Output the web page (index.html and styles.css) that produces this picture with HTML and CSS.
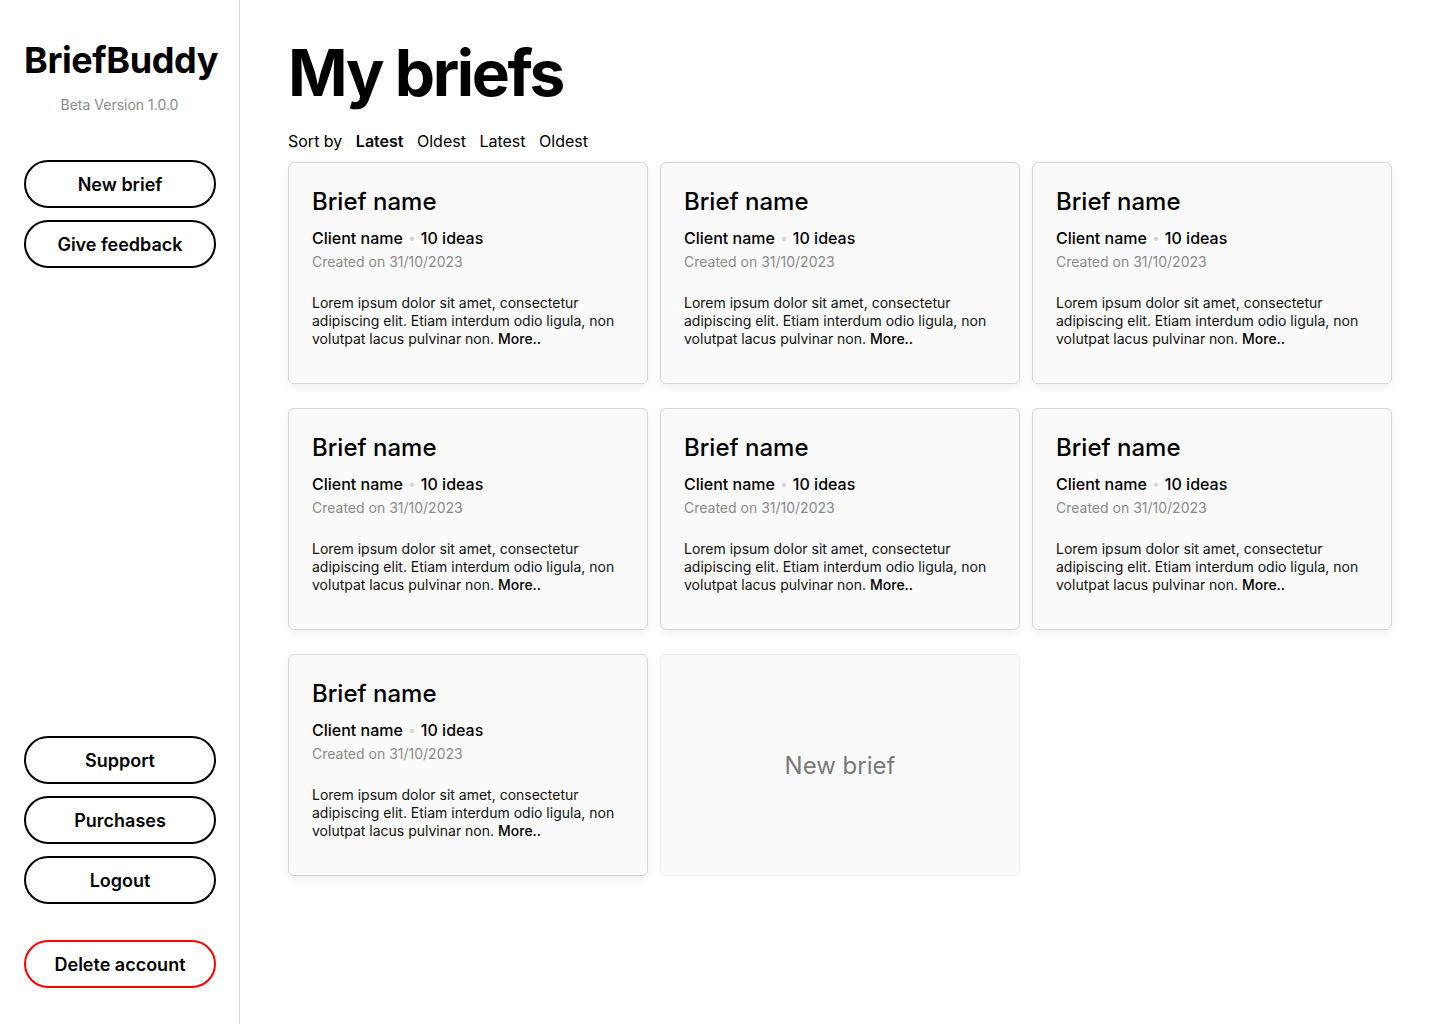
FILE: index.html
```html
<!DOCTYPE html>
<html lang="en">
<head>
<meta charset="utf-8">
<title>BriefBuddy - My briefs</title>
<link rel="stylesheet" href="styles.css">
</head>
<body>
<div class="app">
  <aside class="sidebar">
    <div class="brand">
      <div class="logo">BriefBuddy</div>
      <div class="version">Beta Version 1.0.0</div>
    </div>
    <div class="nav-top">
      <button class="pill">New brief</button>
      <button class="pill">Give feedback</button>
    </div>
    <div class="nav-bottom">
      <button class="pill">Support</button>
      <button class="pill">Purchases</button>
      <button class="pill">Logout</button>
      <button class="pill danger">Delete account</button>
    </div>
  </aside>
  <main class="main">
    <h1 class="page-title">My briefs</h1>
    <div class="sort">
      <span class="sort-label">Sort by</span>
      <span class="sort-opt active">Latest</span>
      <span class="sort-opt">Oldest</span>
      <span class="sort-opt">Latest</span>
      <span class="sort-opt">Oldest</span>
    </div>
    <div class="grid">
      <div class="card">
        <div class="card-title">Brief name</div>
        <div class="card-meta">Client name <span class="dot">•</span> 10 ideas</div>
        <div class="card-date">Created on 31/10/2023</div>
        <p class="card-desc">Lorem ipsum dolor sit amet, consectetur adipiscing elit. Etiam interdum odio ligula, non volutpat lacus pulvinar non. <b class="more">More..</b></p>
      </div>
      <div class="card">
        <div class="card-title">Brief name</div>
        <div class="card-meta">Client name <span class="dot">•</span> 10 ideas</div>
        <div class="card-date">Created on 31/10/2023</div>
        <p class="card-desc">Lorem ipsum dolor sit amet, consectetur adipiscing elit. Etiam interdum odio ligula, non volutpat lacus pulvinar non. <b class="more">More..</b></p>
      </div>
      <div class="card">
        <div class="card-title">Brief name</div>
        <div class="card-meta">Client name <span class="dot">•</span> 10 ideas</div>
        <div class="card-date">Created on 31/10/2023</div>
        <p class="card-desc">Lorem ipsum dolor sit amet, consectetur adipiscing elit. Etiam interdum odio ligula, non volutpat lacus pulvinar non. <b class="more">More..</b></p>
      </div>
      <div class="card">
        <div class="card-title">Brief name</div>
        <div class="card-meta">Client name <span class="dot">•</span> 10 ideas</div>
        <div class="card-date">Created on 31/10/2023</div>
        <p class="card-desc">Lorem ipsum dolor sit amet, consectetur adipiscing elit. Etiam interdum odio ligula, non volutpat lacus pulvinar non. <b class="more">More..</b></p>
      </div>
      <div class="card">
        <div class="card-title">Brief name</div>
        <div class="card-meta">Client name <span class="dot">•</span> 10 ideas</div>
        <div class="card-date">Created on 31/10/2023</div>
        <p class="card-desc">Lorem ipsum dolor sit amet, consectetur adipiscing elit. Etiam interdum odio ligula, non volutpat lacus pulvinar non. <b class="more">More..</b></p>
      </div>
      <div class="card">
        <div class="card-title">Brief name</div>
        <div class="card-meta">Client name <span class="dot">•</span> 10 ideas</div>
        <div class="card-date">Created on 31/10/2023</div>
        <p class="card-desc">Lorem ipsum dolor sit amet, consectetur adipiscing elit. Etiam interdum odio ligula, non volutpat lacus pulvinar non. <b class="more">More..</b></p>
      </div>
      <div class="card">
        <div class="card-title">Brief name</div>
        <div class="card-meta">Client name <span class="dot">•</span> 10 ideas</div>
        <div class="card-date">Created on 31/10/2023</div>
        <p class="card-desc">Lorem ipsum dolor sit amet, consectetur adipiscing elit. Etiam interdum odio ligula, non volutpat lacus pulvinar non. <b class="more">More..</b></p>
      </div>
      <div class="card card-new">New brief</div>
    </div>
  </main>
</div>
</body>
</html>
```

FILE: styles.css
```css
* { box-sizing: border-box; }
html, body {
  margin: 0;
  padding: 0;
  background: #fff;
  color: #000;
  font-family: Inter, "Noto Sans", "Liberation Sans", sans-serif;
}
.app {
  display: flex;
  min-height: 1024px;
}
.sidebar {
  width: 240px;
  flex: 0 0 240px;
  border-right: 1px solid #d9d9d9;
  display: flex;
  flex-direction: column;
  padding: 38px 24px 36px 24px;
}
.brand {
  text-align: center;
}
.logo {
  font-size: 36px;
  font-weight: 700;
  line-height: 44px;
  letter-spacing: -0.4px;
}
.version {
  margin-top: 14px;
  font-size: 14px;
  line-height: 17px;
  color: #8a8a8a;
}
.nav-top {
  margin-top: 47px;
  display: flex;
  flex-direction: column;
  gap: 12px;
}
.nav-bottom {
  margin-top: auto;
  display: flex;
  flex-direction: column;
  gap: 12px;
}
.pill {
  width: 192px;
  height: 48px;
  border: 2px solid #000;
  border-radius: 24px;
  background: #fff;
  font-family: inherit;
  font-size: 18px;
  font-weight: 600;
  color: #000;
  padding: 0;
  cursor: pointer;
}
.pill.danger {
  border-color: #ff0000;
  margin-top: 24px;
}
.main {
  flex: 1;
  padding: 34px 48px 48px 48px;
}
.page-title {
  margin: 0;
  font-size: 64px;
  font-weight: 700;
  line-height: 78px;
  letter-spacing: -2.4px;
}
.sort {
  margin-top: 19px;
  display: flex;
  gap: 13.5px;
  font-size: 16px;
  line-height: 20px;
}
.sort-opt.active { font-weight: 600; }
.grid {
  margin-top: 11px;
  display: grid;
  grid-template-columns: repeat(3, 1fr);
  column-gap: 12px;
  row-gap: 24px;
}
.card {
  height: 222px;
  background: #fafafa;
  border: 1px solid #d6d6d6;
  border-radius: 6px;
  box-shadow: 0 4px 10px rgba(0, 0, 0, 0.06);
  padding: 24px 23px;
}
.card-title {
  font-size: 24px;
  font-weight: 500;
  line-height: 29px;
}
.card-meta {
  margin-top: 12px;
  font-size: 16px;
  font-weight: 500;
  line-height: 20px;
}
.dot {
  color: #d6d6d6;
  font-size: 14px;
  line-height: 1;
  vertical-align: 1px;
  margin: 0 1px;
}
.card-date {
  margin-top: 5px;
  font-size: 14px;
  line-height: 17px;
  color: #8a8a8a;
}
.card-desc {
  margin: 24px 0 0 0;
  font-size: 14px;
  line-height: 18px;
  color: #111;
}
.more { font-weight: 500; color: #000; }
.card-new {
  box-shadow: none;
  border-color: #ececec;
  display: flex;
  align-items: center;
  justify-content: center;
  font-size: 24px;
  color: #7a7a7a;
}
```
